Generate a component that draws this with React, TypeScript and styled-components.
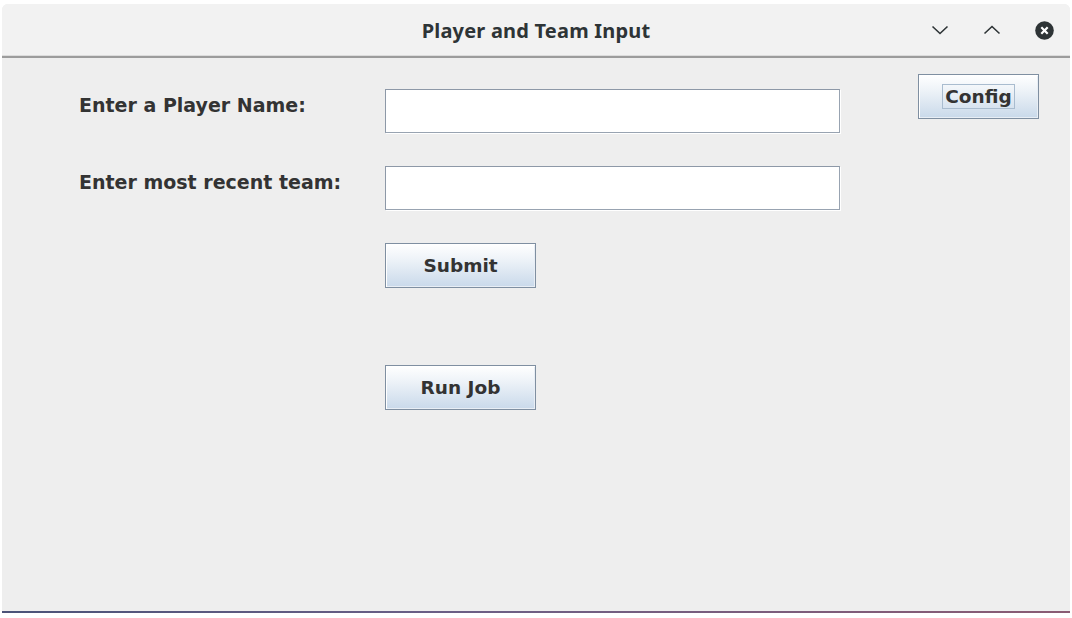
import React from "react";
import styled, { createGlobalStyle } from "styled-components";

const GlobalStyle = createGlobalStyle`
  html, body {
    margin: 0;
    padding: 0;
    background: #ffffff;
  }
  * {
    box-sizing: border-box;
  }
`;

const Desktop = styled.div`
  width: 1072px;
  height: 618px;
  padding: 4px 2px 0 2px;
  background: #ffffff;
  display: flex;
  flex-direction: column;
`;

const Frame = styled.div`
  width: 1068px;
  height: 607px;
  display: flex;
  flex-direction: column;
  background: #eeeeee;
  border-radius: 6px 6px 0 0;
  overflow: hidden;
`;

const TitleBar = styled.div`
  height: 54px;
  flex: none;
  display: grid;
  grid-template-columns: 1fr auto 1fr;
  align-items: center;
  background: #f2f2f2;
  border-bottom: 2px solid #9c9c9c;
  box-shadow: inset 0 -1px 0 #dcdcdc;
  padding: 0 8px;
`;

const Title = styled.div`
  grid-column: 2;
  font-family: "Noto Sans", "Open Sans", sans-serif;
  font-weight: 700;
  font-size: 20px;
  letter-spacing: 0.2px;
  color: #2e3436;
  padding-top: 1px;
`;

const Controls = styled.div`
  grid-column: 3;
  justify-self: end;
  display: flex;
  gap: 16px;
  align-items: center;
`;

const ControlButton = styled.div`
  width: 36px;
  height: 36px;
  display: flex;
  align-items: center;
  justify-content: center;
  color: #2e3436;
`;

const Content = styled.div`
  flex: 1;
  display: flex;
  align-items: flex-start;
`;

const Form = styled.div`
  display: grid;
  grid-template-columns: 306px 455px;
  grid-auto-rows: auto;
  row-gap: 33px;
  padding: 31px 0 0 77px;
`;

const Label = styled.div`
  font-family: "DejaVu Sans", "Liberation Sans", sans-serif;
  font-weight: 700;
  font-size: 19px;
  color: #333333;
  padding-top: 5px;
`;

const Field = styled.input`
  width: 455px;
  height: 44px;
  margin: 0;
  padding: 0 6px;
  background: #ffffff;
  border: 1px solid #98a3b1;
  border-top-color: #8d98a7;
  border-left-color: #8d98a7;
  box-shadow: 1px 1px 0 #ffffff;
  outline: none;
  font-family: "DejaVu Sans", sans-serif;
  font-size: 18px;
`;

const Button = styled.button<{ $width: number; $spaceAbove?: number }>`
  width: ${(p) => p.$width}px;
  height: 45px;
  margin: ${(p) => p.$spaceAbove ?? 0}px 0 0 0;
  padding: 0;
  display: flex;
  align-items: center;
  justify-content: center;
  border: 1px solid #7f8fa1;
  box-shadow: inset 1px 1px 0 #ffffff, inset -1px -1px 0 #e8eef5;
  background: linear-gradient(to bottom, #ffffff 0%, #eef3f8 35%, #c9d9ea 100%);
  font-family: "DejaVu Sans", "Liberation Sans", sans-serif;
  font-weight: 700;
  font-size: 18.5px;
  color: #333333;
  cursor: default;
`;

const FocusRing = styled.span`
  display: inline-flex;
  align-items: center;
  height: 25px;
  padding: 0 2px;
  border: 1px solid #a9bccf;
`;

const ConfigButton = styled(Button)`
  margin: 16px 0 0 78px;
`;

const DesktopEdge = styled.div`
  height: 2px;
  width: 1068px;
  background: linear-gradient(to right, #4b5378 0%, #6a5f86 40%, #8a5b73 100%);
`;

const ChevronDown = () => (
  <svg width="18" height="10" viewBox="0 0 18 10">
    <path d="M1.5 1.5 L9 8.5 L16.5 1.5" fill="none" stroke="currentColor" strokeWidth="1.6" />
  </svg>
);

const ChevronUp = () => (
  <svg width="18" height="10" viewBox="0 0 18 10">
    <path d="M1.5 8.5 L9 1.5 L16.5 8.5" fill="none" stroke="currentColor" strokeWidth="1.6" />
  </svg>
);

const CloseIcon = () => (
  <svg width="19" height="19" viewBox="0 0 19 19">
    <circle cx="9.5" cy="9.5" r="9.3" fill="#2e3436" />
    <path d="M6.3 6.3 L12.7 12.7 M12.7 6.3 L6.3 12.7" stroke="#ffffff" strokeWidth="2.2" />
  </svg>
);

const App = () => {
  return (
    <>
      <GlobalStyle />
      <Desktop>
        <Frame>
          <TitleBar>
            <Title>Player and Team Input</Title>
            <Controls>
              <ControlButton>
                <ChevronDown />
              </ControlButton>
              <ControlButton>
                <ChevronUp />
              </ControlButton>
              <ControlButton>
                <CloseIcon />
              </ControlButton>
            </Controls>
          </TitleBar>
          <Content>
            <Form>
              <Label>Enter a Player Name:</Label>
              <Field type="text" />
              <Label>Enter most recent team:</Label>
              <Field type="text" />
              <div />
              <Button $width={151}>Submit</Button>
              <div />
              <Button $width={151} $spaceAbove={44}>
                Run Job
              </Button>
            </Form>
            <ConfigButton $width={121}>
              <FocusRing>Config</FocusRing>
            </ConfigButton>
          </Content>
        </Frame>
        <DesktopEdge />
      </Desktop>
    </>
  );
};

export default App;
